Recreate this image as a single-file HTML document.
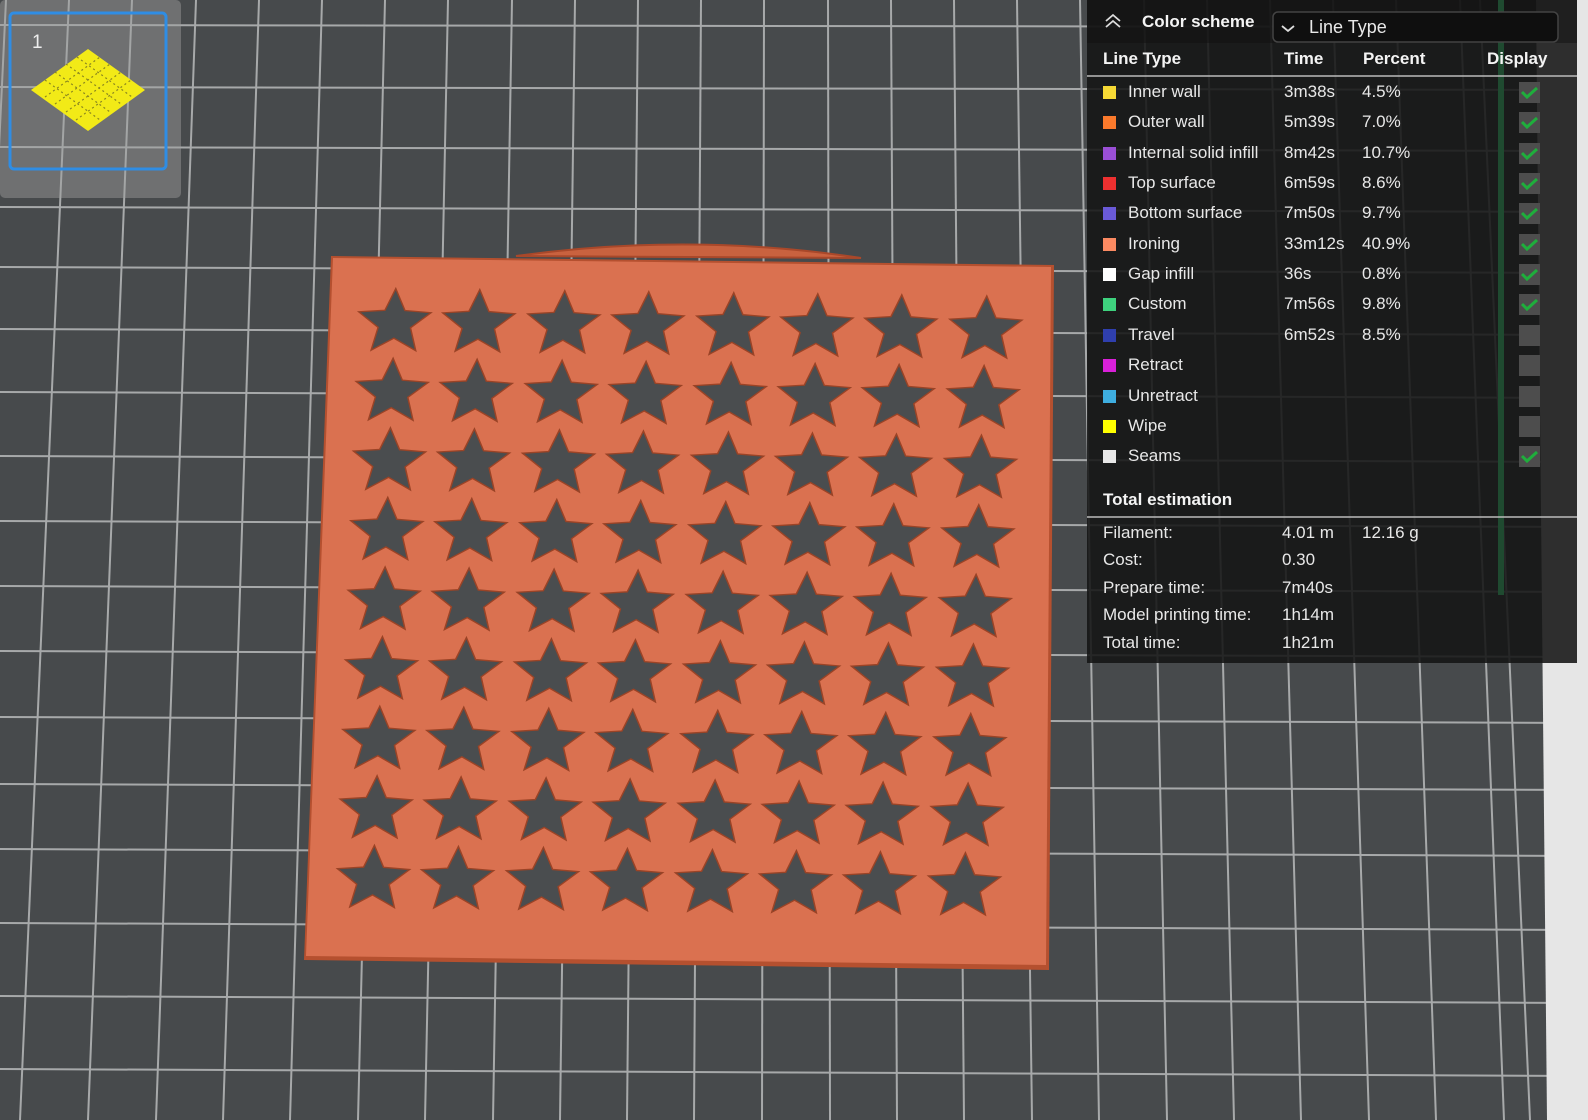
<!DOCTYPE html>
<html><head><meta charset="utf-8"><style>
html,body{margin:0;padding:0;width:1588px;height:1120px;overflow:hidden;background:#474a4c;font-family:"Liberation Sans",sans-serif;}
#bg{position:absolute;left:0;top:0}
.t{position:absolute;color:#e8e8e8;font-size:17px;line-height:20px;white-space:nowrap}
.b{font-weight:bold;color:#f4f4f4}
.sw{position:absolute;width:13px;height:13px}
</style></head><body>
<svg id="bg" width="1588" height="1120" viewBox="0 0 1588 1120">
<rect width="1588" height="1120" fill="#474a4c"/>
<g stroke="#a7a9aa" stroke-width="2" fill="none">
<line x1="0" y1="25" x2="1588" y2="27"/><line x1="0" y1="87" x2="1588" y2="90"/>
<line x1="0" y1="147" x2="1588" y2="151"/><line x1="0" y1="207" x2="1588" y2="212"/>
<line x1="0" y1="267" x2="1588" y2="273"/><line x1="0" y1="329" x2="1588" y2="335"/>
<line x1="0" y1="392" x2="1588" y2="398"/><line x1="0" y1="456" x2="1588" y2="462"/>
<line x1="0" y1="521" x2="1588" y2="527"/><line x1="0" y1="586" x2="1588" y2="592"/>
<line x1="0" y1="651" x2="1588" y2="657"/><line x1="0" y1="717" x2="1588" y2="723"/>
<line x1="0" y1="784" x2="1588" y2="790"/><line x1="0" y1="849" x2="1588" y2="856"/>
<line x1="0" y1="923" x2="1588" y2="930"/><line x1="0" y1="996" x2="1588" y2="1003"/>
<line x1="0" y1="1069" x2="1588" y2="1076"/>
<line x1="6" y1="0" x2="-47" y2="1120"/><line x1="69" y1="0" x2="20" y2="1120"/>
<line x1="132" y1="0" x2="88" y2="1120"/><line x1="196" y1="0" x2="156" y2="1120"/>
<line x1="259" y1="0" x2="223" y2="1120"/><line x1="322" y1="0" x2="290" y2="1120"/>
<line x1="385" y1="0" x2="358" y2="1120"/><line x1="448" y1="0" x2="425" y2="1120"/>
<line x1="512" y1="0" x2="493" y2="1120"/><line x1="575" y1="0" x2="560" y2="1120"/>
<line x1="638" y1="0" x2="627" y2="1120"/><line x1="701" y1="0" x2="694" y2="1120"/>
<line x1="764" y1="0" x2="762" y2="1120"/><line x1="828" y1="0" x2="830" y2="1120"/>
<line x1="891" y1="0" x2="897" y2="1120"/><line x1="954" y1="0" x2="964" y2="1120"/>
<line x1="1017" y1="0" x2="1032" y2="1120"/><line x1="1080" y1="0" x2="1099" y2="1120"/>
<line x1="1144" y1="0" x2="1167" y2="1120"/><line x1="1207" y1="0" x2="1234" y2="1120"/>
<line x1="1270" y1="0" x2="1301" y2="1120"/><line x1="1333" y1="0" x2="1369" y2="1120"/>
<line x1="1396" y1="0" x2="1436" y2="1120"/><line x1="1460" y1="0" x2="1504" y2="1120"/>
<line x1="1480" y1="0" x2="1530" y2="1120"/>
</g>
<polygon points="1536,0 1588,0 1588,1120 1547,1120" fill="#e6e6e6"/>
<path d="M516,256 Q690,232 861,258 Z" fill="#c9623f" stroke="#a9482a" stroke-width="2"/>
<polygon points="331,256 1054,265 1049,970 304,960" fill="#b5502f"/>
<polygon points="333,258 1051,267 1046,965 306,956" fill="#da7150"/>
<defs><path id="s" d="M0,-38 L10,-13.8 L36.1,-11.7 L16.2,5.3 L22.3,30.7 L0,17 L-22.3,30.7 L-16.2,5.3 L-36.1,-11.7 L-10,-13.8Z" fill="#4a4d4f" stroke="#9a4326" stroke-width="1.5" transform="scale(1,0.9)"/></defs>
<g transform="matrix(1,0.01245,-0.03835,1,331,256)">
<g id="r0"><use href="#s" x="66" y="66"/><use href="#s" x="150" y="66"/><use href="#s" x="235" y="66"/><use href="#s" x="319" y="66"/><use href="#s" x="404" y="66"/><use href="#s" x="488" y="66"/><use href="#s" x="572" y="66"/><use href="#s" x="657" y="66"/></g>
<use href="#r0" y="69.6"/><use href="#r0" y="139.2"/><use href="#r0" y="208.8"/><use href="#r0" y="278.4"/><use href="#r0" y="348"/><use href="#r0" y="417.6"/><use href="#r0" y="487.2"/><use href="#r0" y="556.8"/>
</g>
<rect x="0" y="0" width="181" height="198" rx="5" fill="#a0a0a0" fill-opacity="0.45"/>
<rect x="10" y="13" width="156" height="156" rx="4" fill="none" stroke="#2f8de4" stroke-width="3"/>
<polygon points="88,49 145,90 88,131 31,90" fill="#f2ea17"/>
<g stroke="#8a8620" stroke-width="1.2" stroke-dasharray="2 3">
<line x1="45" y1="80" x2="100" y2="120"/><line x1="55" y1="72" x2="110" y2="112"/><line x1="66" y1="64" x2="121" y2="104"/><line x1="77" y1="57" x2="132" y2="97"/>
<line x1="76" y1="120" x2="131" y2="80"/><line x1="66" y1="112" x2="121" y2="72"/><line x1="55" y1="104" x2="110" y2="64"/><line x1="45" y1="97" x2="100" y2="57"/>
</g>
<rect x="1087" y="0" width="490" height="663" fill="#141414" fill-opacity="0.88"/>
<rect x="1087" y="0" width="490" height="43" fill="#101010" fill-opacity="0.5"/>
<line x1="1501" y1="0" x2="1501" y2="595" stroke="#1f4a30" stroke-width="6"/>
<rect x="1273" y="12" width="285" height="30" rx="5" fill="#0f0f0f" stroke="#444" stroke-width="1.5"/>
<path d="M1106,21 L1113,15 L1120,21 M1106,27 L1113,21 L1120,27" stroke="#ddd" stroke-width="1.8" fill="none"/>
<path d="M1282,26 L1288,31 L1294,26" stroke="#ddd" stroke-width="1.8" fill="none"/>
<line x1="1087" y1="76" x2="1577" y2="76" stroke="#bbb" stroke-width="1.5"/>
<line x1="1087" y1="517" x2="1577" y2="517" stroke="#bbb" stroke-width="1.5"/>
</svg>
<div class="t b" style="left:1142px;top:12px">Color scheme</div>
<div class="t" style="left:1309px;top:17px;font-size:18px">Line Type</div>
<div class="t b" style="left:1103px;top:49px">Line Type</div>
<div class="t b" style="left:1284px;top:49px">Time</div>
<div class="t b" style="left:1363px;top:49px">Percent</div>
<div class="t b" style="left:1487px;top:49px">Display</div>

<div class="sw" style="left:1103px;top:86px;background:#f6d935"></div><div class="t" style="left:1128px;top:82px">Inner wall</div><div class="t" style="left:1284px;top:82px">3m38s</div><div class="t" style="left:1362px;top:82px">4.5%</div>
<div class="sw" style="left:1103px;top:116px;background:#fb7a2c"></div><div class="t" style="left:1128px;top:112px">Outer wall</div><div class="t" style="left:1284px;top:112px">5m39s</div><div class="t" style="left:1362px;top:112px">7.0%</div>
<div class="sw" style="left:1103px;top:147px;background:#9a4fd6"></div><div class="t" style="left:1128px;top:143px">Internal solid infill</div><div class="t" style="left:1284px;top:143px">8m42s</div><div class="t" style="left:1362px;top:143px">10.7%</div>
<div class="sw" style="left:1103px;top:177px;background:#ee3030"></div><div class="t" style="left:1128px;top:173px">Top surface</div><div class="t" style="left:1284px;top:173px">6m59s</div><div class="t" style="left:1362px;top:173px">8.6%</div>
<div class="sw" style="left:1103px;top:207px;background:#6a5ad8"></div><div class="t" style="left:1128px;top:203px">Bottom surface</div><div class="t" style="left:1284px;top:203px">7m50s</div><div class="t" style="left:1362px;top:203px">9.7%</div>
<div class="sw" style="left:1103px;top:238px;background:#fb8a62"></div><div class="t" style="left:1128px;top:234px">Ironing</div><div class="t" style="left:1284px;top:234px">33m12s</div><div class="t" style="left:1362px;top:234px">40.9%</div>
<div class="sw" style="left:1103px;top:268px;background:#ffffff"></div><div class="t" style="left:1128px;top:264px">Gap infill</div><div class="t" style="left:1284px;top:264px">36s</div><div class="t" style="left:1362px;top:264px">0.8%</div>
<div class="sw" style="left:1103px;top:298px;background:#3ed27e"></div><div class="t" style="left:1128px;top:294px">Custom</div><div class="t" style="left:1284px;top:294px">7m56s</div><div class="t" style="left:1362px;top:294px">9.8%</div>
<div class="sw" style="left:1103px;top:329px;background:#2f3fae"></div><div class="t" style="left:1128px;top:325px">Travel</div><div class="t" style="left:1284px;top:325px">6m52s</div><div class="t" style="left:1362px;top:325px">8.5%</div>
<div class="sw" style="left:1103px;top:359px;background:#d920d9"></div><div class="t" style="left:1128px;top:355px">Retract</div>
<div class="sw" style="left:1103px;top:390px;background:#3eaee0"></div><div class="t" style="left:1128px;top:386px">Unretract</div>
<div class="sw" style="left:1103px;top:420px;background:#ffff00"></div><div class="t" style="left:1128px;top:416px">Wipe</div>
<div class="sw" style="left:1103px;top:450px;background:#e8e8e8"></div><div class="t" style="left:1128px;top:446px">Seams</div>

<svg style="position:absolute;left:0;top:0" width="1588" height="1120">
<g fill="#4d4d4d"><rect x="1519" y="82" width="21" height="21"/><rect x="1519" y="112" width="21" height="21"/><rect x="1519" y="143" width="21" height="21"/><rect x="1519" y="173" width="21" height="21"/><rect x="1519" y="203" width="21" height="21"/><rect x="1519" y="234" width="21" height="21"/><rect x="1519" y="264" width="21" height="21"/><rect x="1519" y="294" width="21" height="21"/><rect x="1519" y="325" width="21" height="21"/><rect x="1519" y="355" width="21" height="21"/><rect x="1519" y="386" width="21" height="21"/><rect x="1519" y="416" width="21" height="21"/><rect x="1519" y="446" width="21" height="21"/></g>
<g stroke="#1fae3c" stroke-width="3" fill="none"><path d="M1522,92 l5,5 l10,-9"/><path d="M1522,122 l5,5 l10,-9"/><path d="M1522,153 l5,5 l10,-9"/><path d="M1522,183 l5,5 l10,-9"/><path d="M1522,213 l5,5 l10,-9"/><path d="M1522,244 l5,5 l10,-9"/><path d="M1522,274 l5,5 l10,-9"/><path d="M1522,304 l5,5 l10,-9"/><path d="M1522,456 l5,5 l10,-9"/></g>
</svg>

<div class="t b" style="left:1103px;top:490px">Total estimation</div>
<div class="t" style="left:1103px;top:523px">Filament:</div><div class="t" style="left:1282px;top:523px">4.01 m</div><div class="t" style="left:1362px;top:523px">12.16 g</div>
<div class="t" style="left:1103px;top:550px">Cost:</div><div class="t" style="left:1282px;top:550px">0.30</div>
<div class="t" style="left:1103px;top:578px">Prepare time:</div><div class="t" style="left:1282px;top:578px">7m40s</div>
<div class="t" style="left:1103px;top:605px">Model printing time:</div><div class="t" style="left:1282px;top:605px">1h14m</div>
<div class="t" style="left:1103px;top:633px">Total time:</div><div class="t" style="left:1282px;top:633px">1h21m</div>
<div class="t" style="left:32px;top:33px;font-size:19px;color:#eee">1</div>
</body></html>
